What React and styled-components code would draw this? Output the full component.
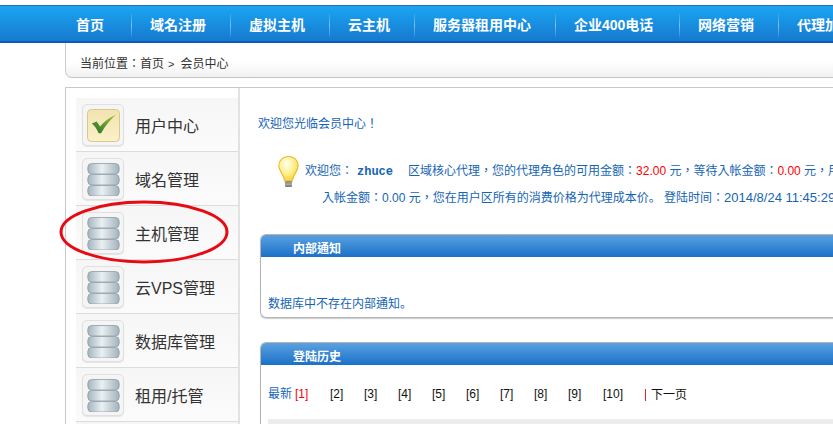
import React from 'react';
import styled, { createGlobalStyle } from 'styled-components';

const Global = createGlobalStyle`
  html, body { margin: 0; padding: 0; background: #fff; overflow: hidden; }
  body { font-family: "Liberation Sans", "Noto Sans CJK TC", sans-serif; font-size: 12px; }
`;
const Page = styled.div`position: relative; width: 833px; height: 424px; overflow: hidden; padding-top: 5px; box-sizing: border-box;`;
const Nav = styled.nav`
  height: 38px; box-sizing: border-box; display: flex; align-items: flex-start; padding-left: 58px;
  border-top: 1px solid #2a6ea8; border-bottom: 2px solid #0b5cb4;
  background: linear-gradient(#1ba5f2, #1679cf); white-space: nowrap;
`;
const NavItem = styled.a`
  flex: none; box-sizing: border-box; width: ${p => p.$w}px; padding-left: 18px; color: #fff; font-size: 14px; font-weight: 700; line-height: 38px;
  height: 35px; position: relative;
  &:not(:last-child)::after { content: ""; position: absolute; right: 0; top: 7px; height: 25px; width: 1px;
    background: linear-gradient(rgba(255,255,255,.05), rgba(255,255,255,.45), rgba(255,255,255,.05)); }
`;
const Crumb = styled.div`
  margin-left: 65px; height: 35px; box-sizing: border-box; padding: 13px 0 0 14px; color: #333; font-size: 12px; line-height: 17px;
  border-left: 1px solid #ccc; border-bottom: 1px solid #c4c4c4; border-bottom-left-radius: 7px;
  background: linear-gradient(#fff 55%, #f1f1f1);
`;
const CrumbSep = styled.span`margin: 0 6px 0 4px; font-size: 11px;`;
const Main = styled.div`
  margin: 9px 0 0 65px; display: flex; border-top: 1px solid #c8c8c8; border-left: 1px solid #c8c8c8; height: 340px;
`;
const Side = styled.aside`
  flex: none; width: 174px; box-sizing: border-box; padding: 10px 0 0 10px; border-right: 2px solid #e2e2e2;
`;
const Row = styled.div`
  height: 54px; box-sizing: border-box; display: flex; align-items: center; padding: 1px 0 0 6px; gap: 11px;
  border-bottom: 1px solid #dcdcdc; background: linear-gradient(#f6f6f6, #fbfbfb);
`;
const Tile = styled.span`
  flex: none; width: 42px; height: 42px; box-sizing: border-box; border: 1px solid #e0e0e0; border-radius: 5px; background: #f5f5f5;
  box-shadow: 0 1px 1px #e4e4e4;
  display: flex; align-items: center; justify-content: center;
`;
const RowLabel = styled.span`font-size: 16px; color: #333; line-height: 22px; padding-top: 3px;`;
const Content = styled.section`flex: 1; min-width: 0; padding: 28px 0 0 18px; color: #1565b5; font-size: 12px; overflow: hidden;`;
const Welcome = styled.div`line-height: 17px;`;
const Info = styled.div`display: flex; margin: 25px 0 0 19px; white-space: nowrap;`;
const Bulb = styled.svg`flex: none; width: 23px; height: 34px; margin-top: -3px;`;
const Lines = styled.div`margin-left: 5px;`;
const Line = styled.div`height: 26px; line-height: 26px; padding-left: ${p => p.$indent || 0}px;`;
const Name = styled.b`font-family: "Liberation Mono", monospace; margin: 0 15px 0 4px;`;
const Red = styled.span`color: #f00;`;
const Stop = styled.span`font-family: "Noto Sans CJK SC", sans-serif;`;
const Stamp = styled.span`font-size: 13px;`;
const Panel = styled.div`
  margin: 24px 0 0 2px; width: 700px; height: ${p => p.$h}px; box-sizing: border-box; overflow: hidden;
  border: 1px solid #b5b5b5; border-right: 0; border-radius: 6px 0 0 6px; box-shadow: 0 1px 1px #ccc;
`;
const PanelHead = styled.div`
  height: 22px; padding-left: 32px; color: #fff; font-weight: 700; font-size: 12px; line-height: 28px; overflow: hidden;
  background: linear-gradient(#5ba1e0, #1a70c8);
`;
const PanelText = styled.div`padding: 37px 0 0 7px; line-height: 17px;`;
const Pager = styled.div`display: flex; align-items: center; padding: 21px 0 0 7px; height: 17px; line-height: 17px; white-space: nowrap;`;
const PageNum = styled.span`color: ${p => p.$red ? '#f00' : p.$link ? '#1565b5' : '#111'}; width: ${p => p.$w || 34}px; flex: none; font-size: 12px;`;
const Next = styled.span`color: #111; border-left: 1px solid #e22; padding-left: 5px; line-height: 12px;`;
const TableHead = styled.div`margin: 16px 0 0 7px; height: 20px; background: #ececec;`;
const Ring = styled.svg`position: absolute; left: 58px; top: 198px; width: 172px; height: 68px; pointer-events: none;`;

const DbIcon = () => (
  <svg width="33" height="33" viewBox="0 0 33 33">
    <defs>
      <linearGradient id="dbg" x1="0" x2="1" y1="0" y2="0">
        <stop offset="0" stopColor="#a4b4bd" /><stop offset=".45" stopColor="#eaf0f3" /><stop offset="1" stopColor="#a2b2bb" />
      </linearGradient>
    </defs>
    {[0, 11, 22].map(y => (
      <rect key={y} x=".8" y={y + .5} width="31.4" height="10.5" rx="4" fill="url(#dbg)" stroke="#8e9da6" strokeWidth=".8" />
    ))}
  </svg>
);
const CheckIcon = () => (
  <svg width="33" height="33" viewBox="0 0 34 34">
    <defs>
      <linearGradient id="ckb" x1="0" x2="0" y1="0" y2="1"><stop offset="0" stopColor="#f2e3b0" /><stop offset="1" stopColor="#fbf0c8" /></linearGradient>
      <linearGradient id="ckg" x1="0" x2="1" y1="1" y2="0"><stop offset="0" stopColor="#1f6d2e" /><stop offset="1" stopColor="#a8c92f" /></linearGradient>
    </defs>
    <rect x=".5" y=".5" width="33" height="33" rx="4" fill="url(#ckb)" stroke="#d9c58a" />
    <path d="M5 15 L10 13 L13.5 18 C17.5 13 23 9 30 6 C24 11 19 17 14.5 25 L12 25 C10.5 21 8 17.5 5 15 Z" fill="url(#ckg)" />
  </svg>
);

const menu = [
  ['用户中心', true], ['域名管理'], ['主机管理'], ['云VPS管理'], ['数据库管理'], ['租用/托管'],
];
const navItems = [
  ['首页', 74], ['域名注册', 99], ['虚拟主机', 99], ['云主机', 85], ['服务器租用中心', 141], ['企业400电话', 124], ['网络营销', 99], ['代理加盟', 99],
];
const pages = [['[1]', 35, true], ['[2]', 34], ['[3]', 34], ['[4]', 34], ['[5]', 34], ['[6]', 34], ['[7]', 34], ['[8]', 34], ['[9]', 35], ['[10]', 42]];

export default function App() {
  return (
    <Page>
      <Global />
      <Nav>
        {navItems.map(([t, w]) => <NavItem key={t} $w={w}>{t}</NavItem>)}
      </Nav>
      <Crumb>当前位置：首页<CrumbSep>&gt;</CrumbSep>会员中心</Crumb>
      <Main>
        <Side>
          {menu.map(([t, ok]) => (
            <Row key={t}>
              <Tile>{ok ? <CheckIcon /> : <DbIcon />}</Tile>
              <RowLabel>{t}</RowLabel>
            </Row>
          ))}
          <Row />
        </Side>
        <Content>
          <Welcome>欢迎您光临会员中心！</Welcome>
          <Info>
            <Bulb viewBox="0 0 26 37">
              <defs>
                <radialGradient id="blb" cx=".4" cy=".3" r=".75">
                  <stop offset="0" stopColor="#fffef0" /><stop offset=".55" stopColor="#ffef8a" /><stop offset="1" stopColor="#f7c733" />
                </radialGradient>
              </defs>
              <path d="M13 1 C6 1 2 6 2 11.5 C2 17 7 20 9 29 L17 29 C19 20 24 17 24 11.5 C24 6 20 1 13 1 Z" fill="url(#blb)" stroke="#eeb92c" strokeWidth="1.2" />
              <rect x="9" y="29" width="8" height="6.5" rx="1.5" fill="#7b7b75" />
              <path d="M9 31 H17 M9 33 H17" stroke="#c5c5bd" />
            </Bulb>
            <Lines>
              <Line>欢迎您：<Name>zhuce</Name>区域核心代理，您的代理角色的可用金额：<Red>32.00</Red> 元，等待入帐金额：<Red>0.00</Red> 元，用</Line>
              <Line $indent={17}>入帐金额：0.00 元，您在用户区所有的消费价格为代理成本价<Stop>。</Stop> 登陆时间：<Stamp>2014/8/24 11:45:29</Stamp></Line>
            </Lines>
          </Info>
          <Panel $h={84}>
            <PanelHead>内部通知</PanelHead>
            <PanelText>数据库中不存在内部通知<Stop>。</Stop></PanelText>
          </Panel>
          <Panel $h={120}>
            <PanelHead>登陆历史</PanelHead>
            <Pager>
              <PageNum $w={27} $link>最新</PageNum>
              {pages.map(([t, w, r]) => <PageNum key={t} $w={w} $red={r}>{t}</PageNum>)}
              <Next>下一页</Next>
            </Pager>
            <TableHead />
          </Panel>
        </Content>
      </Main>
      <Ring viewBox="0 0 172 68">
        <ellipse cx="86" cy="34" rx="83" ry="30" fill="none" stroke="#e80a12" strokeWidth="3" />
      </Ring>
    </Page>
  );
}
